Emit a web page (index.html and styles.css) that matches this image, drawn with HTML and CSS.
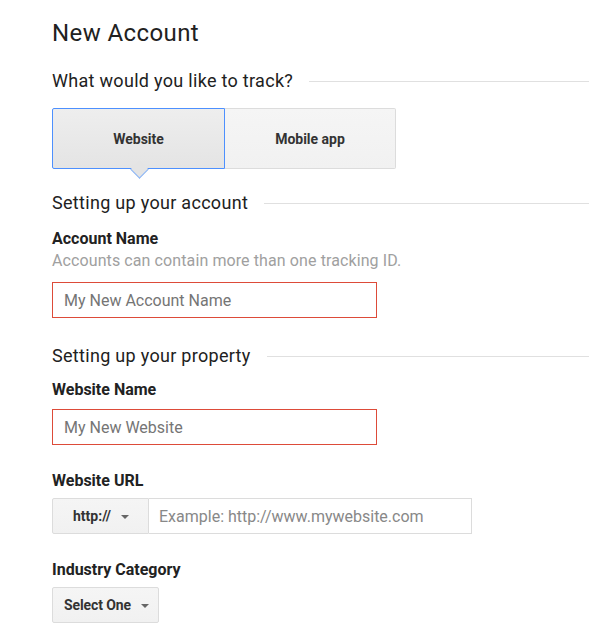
FILE: index.html
```html
<!DOCTYPE html>
<html>
<head>
<meta charset="utf-8">
<link rel="stylesheet" href="styles.css">
</head>
<body>
<div class="page">
  <h1 class="title">New Account</h1>

  <div class="section-head sh-track">
    <span class="section-text">What would you like to track?</span>
    <span class="section-rule"></span>
  </div>

  <div class="tabs">
    <div class="tab tab-active">Website</div>
    <div class="tab">Mobile app</div>
  </div>

  <div class="section-head sh-account">
    <span class="section-text">Setting up your account</span>
    <span class="section-rule"></span>
  </div>

  <div class="label lbl-account">Account Name</div>
  <div class="helper">Accounts can contain more than one tracking ID.</div>
  <div class="input input-error in-account">My New Account Name</div>

  <div class="section-head sh-property">
    <span class="section-text">Setting up your property</span>
    <span class="section-rule"></span>
  </div>

  <div class="label lbl-site">Website Name</div>
  <div class="input input-error in-site">My New Website</div>

  <div class="label lbl-url">Website URL</div>
  <div class="url-group">
    <div class="dd-btn dd-proto"><span>http://</span><span class="caret"></span></div>
    <div class="url-input">Example: http://www.mywebsite.com</div>
  </div>

  <div class="label lbl-industry">Industry Category</div>
  <div class="dd-btn dd-select"><span>Select One</span><span class="caret"></span></div>
</div>
</body>
</html>
```

FILE: styles.css
```css
* { box-sizing: border-box; }
html, body { margin: 0; padding: 0; background: #fff; }
body {
  font-family: Roboto, "Liberation Sans", Arial, sans-serif;
  color: #222;
}
.page {
  padding: 0 0 0 52px;
  width: 589px;
  display: flex;
  flex-direction: column;
  align-items: flex-start;
}
.title {
  margin: 19px 0 0 0;
  font-size: 24px;
  line-height: 28px;
  font-weight: 400;
  letter-spacing: 0.4px;
  color: #212121;
}
.section-head {
  display: flex;
  align-items: center;
  align-self: stretch;
  font-size: 18px;
  line-height: 24px;
  letter-spacing: 0.3px;
  color: #212121;
}
.section-rule {
  flex: 1;
  height: 1px;
  background: #e0e0e0;
  margin-left: 16px;
}
.sh-track { margin-top: 22px; }
.sh-account { margin-top: 22px; }
.sh-property { margin-top: 26px; }

.tabs {
  display: flex;
  margin-top: 15px;
}
.tab {
  position: relative;
  width: 171px;
  height: 61px;
  display: flex;
  align-items: center;
  justify-content: center;
  font-size: 14px;
  font-weight: 700;
  color: #333;
  background: linear-gradient(#f5f5f5, #f1f1f1);
  border: 1px solid #dcdcdc;
  border-left: none;
  border-radius: 0 2px 2px 0;
}
.tab-active {
  width: 173px;
  background: linear-gradient(#eeeeee, #e4e4e4);
  border: 1px solid #4d90fe;
  border-radius: 2px 0 0 2px;
}
.tab-active::after {
  content: "";
  position: absolute;
  left: 50%;
  bottom: -8px;
  width: 12px;
  height: 12px;
  margin-left: -6px;
  background: #e4e4e4;
  border-right: 1px solid #8ab6f8;
  border-bottom: 1px solid #8ab6f8;
  transform: rotate(45deg);
}

.label {
  font-size: 16px;
  font-weight: 700;
  line-height: 20px;
  color: #222;
}
.lbl-account { margin-top: 14px; }
.lbl-site { margin-top: 12px; }
.lbl-url { margin-top: 26px; }
.lbl-industry { margin-top: 26px; }

.helper {
  margin-top: 2px;
  font-size: 16px;
  line-height: 20px;
  letter-spacing: 0.1px;
  color: #a0a0a0;
}

.input {
  width: 325px;
  height: 36px;
  padding: 0 11px;
  display: flex;
  align-items: center;
  font-size: 16px;
  color: #757575;
  border: 1px solid #ccc;
  background: #fff;
}
.input-error { border-color: #dd4b39; }
.in-account { margin-top: 11px; }
.in-site { margin-top: 9px; }

.url-group {
  display: flex;
  margin-top: 7px;
}
.dd-btn {
  height: 36px;
  display: flex;
  align-items: center;
  font-size: 14px;
  font-weight: 700;
  color: #333;
  background: linear-gradient(#f5f5f5, #f1f1f1);
  border: 1px solid #dcdcdc;
  border-radius: 2px;
}
.dd-proto {
  width: 97px;
  padding-left: 20px;
  border-radius: 2px 0 0 2px;
}
.dd-select {
  margin-top: 7px;
  width: 107px;
  padding-left: 11px;
  letter-spacing: -0.1px;
}
.caret {
  width: 0;
  height: 0;
  margin-left: 10px;
  border-left: 4.5px solid transparent;
  border-right: 4.5px solid transparent;
  border-top: 4.5px solid #666;
  margin-top: 1px;
}
.url-input {
  width: 323px;
  height: 36px;
  padding: 0 10px;
  display: flex;
  align-items: center;
  font-size: 16px;
  color: #888;
  border: 1px solid #dcdcdc;
  border-left: none;
  background: #fff;
}
```
